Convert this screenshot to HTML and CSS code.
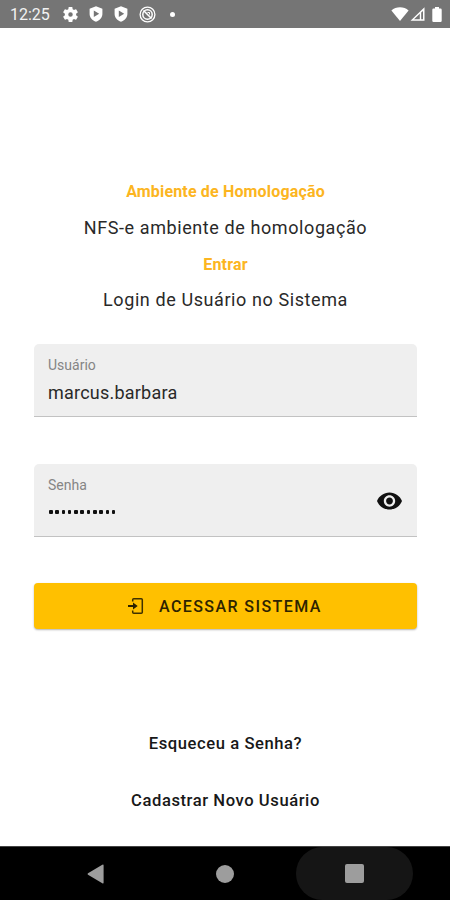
FILE: index.html
```html
<!DOCTYPE html>
<html lang="pt-BR">
<head>
<meta charset="utf-8">
<title>Login</title>
<link rel="stylesheet" href="styles.css">
</head>
<body>
<div class="screen">
  <header class="status">
    <span class="clock">12:25</span>
    <svg class="st gear" viewBox="2 2 20 20"><path fill-rule="evenodd" d="M19.43 12.98c.04-.32.07-.64.07-.98s-.03-.66-.07-.98l2.11-1.65c.19-.15.24-.42.12-.64l-2-3.46c-.12-.22-.39-.3-.61-.22l-2.49 1c-.52-.4-1.08-.73-1.69-.98l-.38-2.65C14.46 2.18 14.25 2 14 2h-4c-.25 0-.46.18-.49.42l-.38 2.65c-.61.25-1.17.59-1.69.98l-2.49-1c-.23-.09-.49 0-.61.22l-2 3.46c-.13.22-.07.49.12.64l2.11 1.65c-.04.32-.07.65-.07.98s.03.66.07.98l-2.110 1.650c-.19.15-.24.42-.12.64l2 3.460c.12.22.39.3.61.22l2.490-1c.52.4 1.080.73 1.690.98l.38 2.650c.03.24.24.42.49.42h4c.25 0 .46-.18.49-.42l.38-2.650c.61-.25 1.170-.59 1.690-.98l2.490 1c.23.09.49 0 .61-.22l2-3.460c.12-.22.07-.49-.12-.64zM12 15a3 3 0 1 1 0-6 3 3 0 0 1 0 6z"/></svg>
    <svg class="st shield" viewBox="0 0 14 16"><path fill-rule="evenodd" d="M7 .3 13.400 2.800V8c0 3.600-2.800 6.500-6.400 7.700C3.400 14.500.6 11.600.6 8V2.800zM4.800 4.500v6.500L10.200 7.700z"/></svg>
    <svg class="st shield" viewBox="0 0 14 16"><path fill-rule="evenodd" d="M7 .3 13.400 2.800V8c0 3.600-2.800 6.500-6.400 7.700C3.400 14.500.6 11.600.6 8V2.800zM4.800 4.500v6.500L10.200 7.700z"/></svg>
    <svg class="st disc" viewBox="0 0 17 17"><g fill="none" stroke="#fff"><circle cx="8.500" cy="8.500" r="7.400" stroke-width="1.300"/><circle cx="8.500" cy="8.500" r="4.700" stroke-width="1.500"/><path stroke-width="1.600" d="M4.500 4.500 12.500 12.500"/><path stroke-width="1" d="M8.500 6.500h2v2"/></g></svg>
    <i class="dot"></i>
    <svg class="st wifi" viewBox="0 0 18 14"><path d="M9 14 .4 3.400C5-.7 13-.7 17.600 3.400z"/></svg>
    <svg class="st signal" viewBox="0 0 15 14"><path fill-rule="evenodd" d="M.5 13.700 14.500.3v13.400zM4 12.200h5.800V6.700zM11.200 5.600v6.600h1.800V3.900z"/></svg>
    <svg class="st battery" viewBox="0 0 10 15"><path d="M3 0h4v1.600h1.500Q9.700 1.600 9.700 2.800v11Q9.700 15 8.500 15h-7Q.3 15 .3 13.800v-11Q.3 1.600 1.500 1.600H3z"/></svg>
  </header>
  <main class="content">
    <h1 class="title t1"><span>Ambiente de Homologação</span></h1>
    <p class="sub s1"><span>NFS-e ambiente de homologação</span></p>
    <h2 class="title t2"><span>Entrar</span></h2>
    <p class="sub s2"><span>Login de Usuário no Sistema</span></p>
    <section class="field">
      <div class="info"><span class="label">Usuário</span><span class="value">marcus.barbara</span></div>
    </section>
    <section class="field second">
      <div class="info"><span class="label">Senha</span><span class="dots"><i></i><i></i><i></i><i></i><i></i><i></i><i></i><i></i><i></i><i></i><i></i></span></div>
      <svg class="eye" viewBox="1 4.500 22 15"><path d="M12 4.500C7 4.500 2.730 7.610 1 12c1.730 4.390 6 7.500 11 7.500s9.270-3.110 11-7.500c-1.730-4.390-6-7.500-11-7.500zM12 17c-2.760 0-5-2.240-5-5s2.240-5 5-5 5 2.240 5 5-2.240 5-5 5zm0-8c-1.660 0-3 1.340-3 3s1.340 3 3 3 3-1.340 3-3-1.340-3-3-3z"/></svg>
    </section>
    <button class="submit">
      <svg class="enter" viewBox="0 0 16 18"><path fill="none" stroke="#3f3100" stroke-width="1.500" d="M4.700 4.500V2.700q0-1 1-1h7.600q1 0 1 1v12.600q0 1-1 1H5.700q-1 0-1-1v-1.800"/><path d="M0 7.900h5V5.400L9.700 9 5 12.600v-2.500H0z"/></svg>
      <span>ACESSAR SISTEMA</span>
    </button>
    <a class="link k1"><span>Esqueceu a Senha?</span></a>
    <a class="link k2"><span>Cadastrar Novo Usuário</span></a>
  </main>
  <nav class="nav">
    <div class="key"><svg class="back" viewBox="0 0 17 20"><path d="M15.300.8Q16.600 0 16.600 1.500v17Q16.600 20 15.300 19.200L1 10.800Q0 10 1 9.200z"/></svg></div>
    <div class="key"><i class="home"></i></div>
    <div class="key pressed"><i class="recent"></i></div>
  </nav>
</div>
</body>
</html>
```
FILE: styles.css
```css
* { box-sizing: border-box; }
body { margin: 0; font-family: Roboto, sans-serif; background: #fff; color: #202020; }
.screen { width: 450px; height: 900px; display: flex; flex-direction: column; overflow: hidden; }
.status { height: 28px; background: #757575; display: flex; align-items: center; padding: 0 8px 0 10px; flex: none; }
.clock { color: #f2f2f2; font-size: 16px; width: 53px; letter-spacing: 0; line-height: 20px; padding-top: 2px; }
.st { fill: #fff; flex: none; display: block; }
.gear { width: 15px; height: 15px; margin-right: 11px; }
.shield { width: 14px; height: 16px; margin-right: 11px; }
.disc { width: 17px; height: 17px; }
.dot { width: 5px; height: 5px; border-radius: 50%; background: #fff; margin-left: 14px; }
.wifi { width: 18px; height: 14px; margin-left: auto; }
.signal { width: 15px; height: 14px; margin-left: 1px; }
.battery { width: 10px; height: 15px; margin-left: 7px; }
.content { flex: 1; display: flex; flex-direction: column; padding: 152px 33px 0 34px; }
.title, .sub { margin: 0; text-align: center; white-space: nowrap; }
.title { font-size: 16px; font-weight: 700; line-height: 24px; height: 36px; letter-spacing: .16px; color: #fcb521; }
.sub { font-size: 18px; font-weight: 400; line-height: 24px; letter-spacing: .59px; color: #292929; }
.t1 { height: 35.500px; }
.s1 { height: 37px; }
.t2 { height: 35.500px; }
.s2 { height: 56px; }
.field { height: 73px; flex: none; background: #efefef; border-bottom: 1.500px solid #c2c2c2; border-radius: 5px 5px 0 0; display: flex; justify-content: space-between; padding: 12px 14px 0; }
.second { margin-top: 47px; }
.info { display: flex; flex-direction: column; align-items: flex-start; }
.label { font-size: 14px; line-height: 18px; color: #858585; letter-spacing: 0; }
.value { font-size: 18px; line-height: 24px; margin-top: 7px; letter-spacing: .22px; color: #292929; }
.dots { display: flex; gap: 2.800px; margin-top: 16px; padding-left: 1px; }
.dots i { width: 3.500px; height: 4px; border-radius: 1px; background: #111; }
.eye { width: 25px; height: 18px; margin: 16px 1px 0 0; fill: #111; }
.submit { height: 46px; flex: none; margin-top: 46px; border: 0; border-radius: 4px; background: #ffc000; box-shadow: 0 1px 2px rgba(0,0,0,.3); font: 500 16px/24px Roboto, sans-serif; letter-spacing: 1.420px; color: #2d2300; display: flex; align-items: center; padding: 0 0 0 94px; }
.submit span { white-space: nowrap; padding-top: 1px; }
.enter { width: 16px; height: 18px; fill: #2d2300; margin-right: 15px; }
.link { text-align: center; font-size: 16.600px; font-weight: 500; line-height: 24px; color: #181818; letter-spacing: .56px; }
.k1 { margin-top: 103px; }
.k2 { margin-top: 33px; }
.nav { height: 54px; flex: none; background: #000; border-top: 1px solid #444; display: flex; justify-content: center; gap: 12.500px; padding-right: 1px; }
.key { width: 117px; height: 53px; display: flex; align-items: center; justify-content: center; }
.pressed { background: #151515; border-radius: 27px; }
.back { width: 17px; height: 20px; fill: #9d9d9d; }
.home { width: 18px; height: 18px; border-radius: 50%; background: #9d9d9d; }
.recent { width: 19px; height: 19px; border-radius: 2px; background: #9d9d9d; }
```
